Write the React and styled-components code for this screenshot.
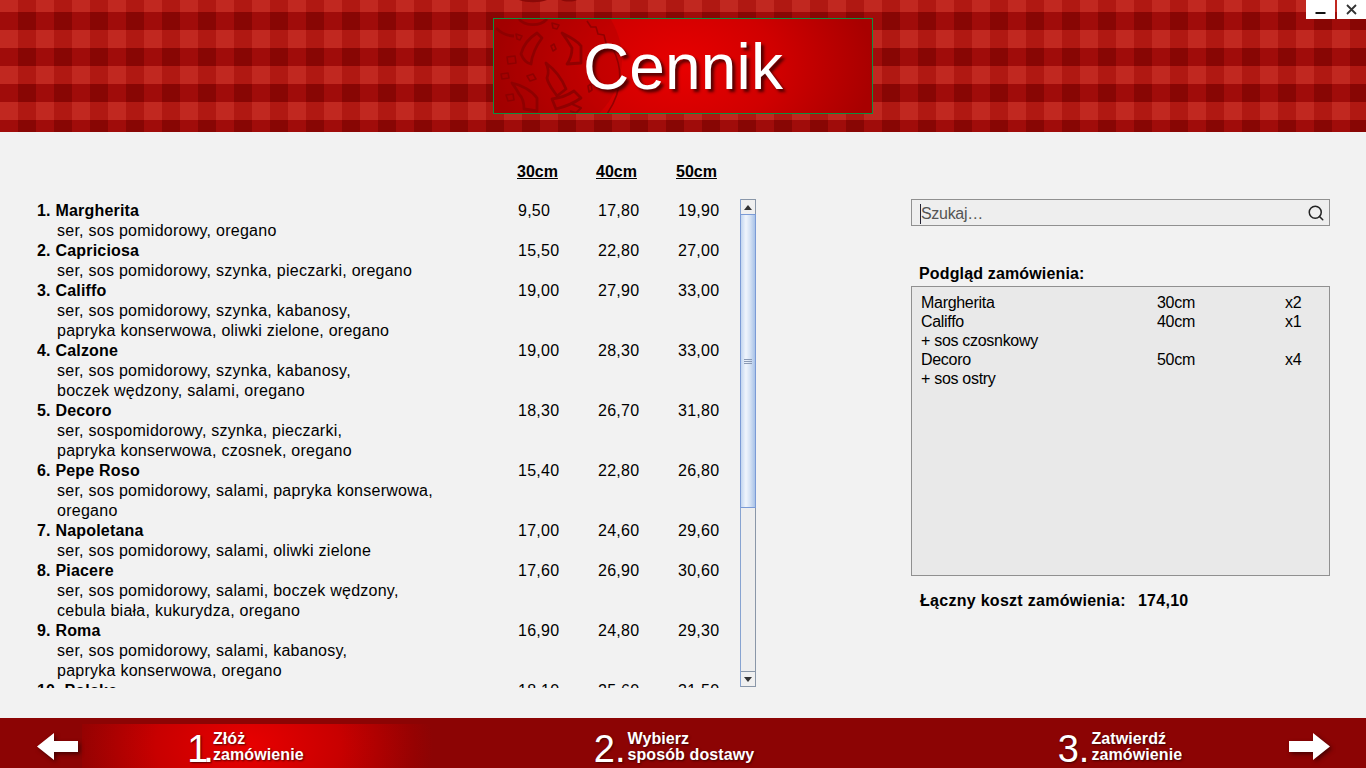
import React from "react";
import styled, { createGlobalStyle } from "styled-components";
import { Search } from "lucide-react";

const Global = createGlobalStyle`
  html, body { margin: 0; padding: 0; }
  body { background: #f2f2f2; font-family: "Liberation Sans", Arial, sans-serif; color: #000; }
  * { box-sizing: border-box; }
`;

const Page = styled.div`
  width: 1366px;
  height: 768px;
  display: flex;
  flex-direction: column;
  overflow: hidden;
  background: #f2f2f2;
`;

const Header = styled.header`
  position: relative;
  height: 132px;
  flex: none;
  display: flex;
  justify-content: center;
  padding-top: 18px;
  background: conic-gradient(#b01812 0 25%, #880604 0 50%, #a00c0a 0 75%, #c12820 0) 0 -6px / 36px 36px;
`;

const TitleBox = styled.div`
  position: relative;
  width: 380px;
  height: 96px;
  border: 1px solid #0f8f3f;
  background: radial-gradient(ellipse 190px 130px at 50% 50%, #e80000 0%, #d00000 50%, #a80000 100%);
  display: flex;
  justify-content: center;
  overflow: hidden;
`;

const Watermark = styled.svg`
  position: absolute;
  left: 0;
  top: 0;
  width: 380px;
  height: 96px;
`;

const TopCrumb = styled.svg`
  position: absolute;
  left: 515px;
  top: 0;
  width: 70px;
  height: 4px;
`;

const Title = styled.h1`
  position: relative;
  margin: 0;
  font-size: 64px;
  line-height: 96px;
  font-weight: 400;
  letter-spacing: 0.15px;
  color: #fff;
  text-shadow: 3px 3px 3px rgba(60, 0, 0, 0.85);
`;

const WindowButtons = styled.div`
  position: absolute;
  top: 0;
  right: 0;
  display: flex;
  gap: 2px;
`;

const WindowButton = styled.div`
  width: 29px;
  height: 19px;
  background: #fff;
  display: flex;
  align-items: center;
  justify-content: center;
  svg { display: block; }
`;

const Main = styled.main`
  flex: 1;
  display: flex;
  min-height: 0;
`;

const LeftColumn = styled.section`
  width: 874px;
  margin-right: 37px;
  padding: 30px 0 0 37px;
  flex: none;
`;

const SizeHeader = styled.div`
  display: grid;
  grid-template-columns: 480px 79px 80px 80px;
  height: 20px;
  margin-bottom: 18px;
`;

const SizeLabel = styled.span`
  font-size: 16px;
  line-height: 20px;
  font-weight: 700;
  text-decoration: underline;
`;

const ListRow = styled.div`
  display: flex;
  align-items: stretch;
`;

const PizzaList = styled.div`
  width: 703px;
  height: 488px;
  padding-top: 1px;
  overflow: hidden;
`;

const Pizza = styled.div`
  display: grid;
  grid-template-columns: 481px 80px 80px 62px;
  font-size: 16px;
  line-height: 20px;
  letter-spacing: 0.26px;
`;

const PizzaName = styled.div`
  font-weight: 700;
  letter-spacing: 0.2px;
`;

const PizzaLine = styled.div`
  padding-left: 20px;
`;

const Scrollbar = styled.div`
  width: 16px;
  height: 488px;
  margin-top: -1px;
  display: flex;
  flex-direction: column;
  background: #eeeeee;
  border-left: 1px solid #87a3d0;
  border-right: 1px solid #8a97a8;
  border-bottom: 1px solid #8a97a8;
`;

const ScrollButton = styled.div`
  height: 15px;
  flex: none;
  display: flex;
  align-items: center;
  justify-content: center;
  background: #f0f0f0;
  border-top: 1px solid #8a97a8;
  svg { display: block; }
`;

const Thumb = styled.div`
  height: 294px;
  flex: none;
  margin: 0 -1px;
  display: flex;
  align-items: center;
  justify-content: center;
  border: 1px solid #7b9bd6;
  background: linear-gradient(90deg, #c3d6f0 0%, #f0f5fc 35%, #d5e2f4 65%, #a9c3e8 100%);
`;

const Grip = styled.div`
  width: 8px;
  height: 5px;
  border-top: 1px solid #8a9ab5;
  border-bottom: 1px solid #8a9ab5;
  background: linear-gradient(#8a9ab5, #8a9ab5) center / 100% 1px no-repeat;
`;

const Track = styled.div`
  flex: 1;
`;

const RightColumn = styled.aside`
  width: 419px;
  flex: none;
  padding-top: 67px;
  display: flex;
  flex-direction: column;
`;

const SearchBox = styled.div`
  height: 27px;
  display: flex;
  align-items: center;
  justify-content: space-between;
  padding: 2px 4px 0 8px;
  background: #eeeeee;
  border: 1px solid #909090;
  svg { margin-top: -2px; }
`;

const Placeholder = styled.span`
  font-size: 16px;
  line-height: 20px;
  letter-spacing: -0.3px;
  color: #555;
  border-left: 1px solid #223;
`;

const SectionTitle = styled.div`
  margin: 38px 0 2px 8px;
  font-size: 16px;
  line-height: 20px;
  font-weight: 700;
  letter-spacing: 0.15px;
`;

const OrderBox = styled.div`
  height: 290px;
  padding: 6px 9px;
  background: #e9e9e9;
  border: 1px solid #909090;
`;

const OrderLine = styled.div`
  display: grid;
  grid-template-columns: 236px 128px 1fr;
  font-size: 16px;
  line-height: 19px;
  letter-spacing: -0.3px;
`;

const Total = styled.div`
  margin: 15px 0 0 9px;
  display: flex;
  gap: 12px;
  font-size: 16px;
  line-height: 20px;
  font-weight: 700;
  letter-spacing: 0.28px;
`;

const Footer = styled.footer`
  height: 50px;
  flex: none;
  background: #8c0404;
  display: grid;
  grid-template-columns: 82px 351px 75px 332px 114px 332px 80px;
  align-items: end;
`;

const ArrowCell = styled.div`
  height: 50px;
  display: flex;
  align-items: center;
  justify-content: ${(p) => (p.$right ? "flex-start" : "flex-end")};
  padding: ${(p) => (p.$right ? "6px 0 0 3px" : "6px 4px 0 0")};
  svg { display: block; overflow: visible; filter: drop-shadow(2px 2px 2px rgba(40, 0, 0, 0.7)); }
`;

const Step = styled.div`
  height: 44px;
  display: flex;
  justify-content: center;
  align-items: flex-end;
  padding-right: ${(p) => (p.$active ? 24 : 0)}px;
  color: #fff;
  text-shadow: 1px 1px 2px rgba(50, 0, 0, 0.8);
  background: ${(p) =>
    p.$active
      ? "radial-gradient(ellipse 185px 130px at 166px 50%, #e80000 0%, #c80000 50%, #960202 90%, #8c0404 100%)"
      : "transparent"};
`;

const StepNumber = styled.span`
  font-size: 38px;
  line-height: 46px;
  margin-right: ${(p) => (p.$tight ? 4 : 2)}px;
  margin-bottom: -4px;
  letter-spacing: ${(p) => (p.$tight ? -5 : 0)}px;
`;

const StepText = styled.div`
  font-size: 16px;
  line-height: 16px;
  font-weight: 700;
  letter-spacing: 0.1px;
  padding-bottom: 5px;
`;

const Spacer = styled.div``;

const pizzas = [
  ["1. Margherita", ["ser, sos pomidorowy, oregano"], ["9,50", "17,80", "19,90"]],
  ["2. Capriciosa", ["ser, sos pomidorowy, szynka, pieczarki, oregano"], ["15,50", "22,80", "27,00"]],
  ["3. Califfo", ["ser, sos pomidorowy, szynka, kabanosy,", "papryka konserwowa, oliwki zielone, oregano"], ["19,00", "27,90", "33,00"]],
  ["4. Calzone", ["ser, sos pomidorowy, szynka, kabanosy,", "boczek wędzony, salami, oregano"], ["19,00", "28,30", "33,00"]],
  ["5. Decoro", ["ser, sospomidorowy, szynka, pieczarki,", "papryka konserwowa, czosnek, oregano"], ["18,30", "26,70", "31,80"]],
  ["6. Pepe Roso", ["ser, sos pomidorowy, salami, papryka konserwowa,", "oregano"], ["15,40", "22,80", "26,80"]],
  ["7. Napoletana", ["ser, sos pomidorowy, salami, oliwki zielone"], ["17,00", "24,60", "29,60"]],
  ["8. Piacere", ["ser, sos pomidorowy, salami, boczek wędzony,", "cebula biała, kukurydza, oregano"], ["17,60", "26,90", "30,60"]],
  ["9. Roma", ["ser, sos pomidorowy, salami, kabanosy,", "papryka konserwowa, oregano"], ["16,90", "24,80", "29,30"]],
  ["10. Polska", ["ser, sos pomidorowy, salami"], ["18,10", "25,60", "31,50"]],
];

const order = [
  ["Margherita", "30cm", "x2"],
  ["Califfo", "40cm", "x1"],
  ["+ sos czosnkowy", "", ""],
  ["Decoro", "50cm", "x4"],
  ["+ sos ostry", "", ""],
];

const PizzaArt = () => (
  <Watermark viewBox="0 0 380 96" fill="none" stroke="#8c0000" strokeOpacity="0.9" strokeWidth="2.8" strokeLinejoin="round">
    <circle cx="52" cy="40" r="76" fill="#8c0000" fillOpacity="0.22" stroke="none" />
    <path d="M2 9 C8 15 14 17 20 17" />
    <path d="M25 0 C30 7 46 8 53 0" />
    <path d="M93 2 L97 8 L102 8 L104 15 L110 16 L112 24 L119 30 C128 48 130 70 113 95" strokeWidth="1.6" />
    <path d="M43 14 L48 19 C42 27 38 36 37 45 C32 44 29 40 27 35 C29 27 35 19 43 14Z" />
    <path d="M68 14 C76 18 84 22 87 27 L87 44 L73 45 C78 38 78 32 78 29 C75 24 71 18 68 14Z" />
    <path d="M52 44 C60 50 68 60 72 70 L63 77 C60 72 54 66 53 59 C55 54 54 48 52 44Z" />
    <path d="M18 64 C28 66 38 72 43 79 L43 92 L30 90 C30 84 28 78 25 75 C23 71 20 67 18 64Z" />
    <path d="M58 80 C66 79 74 76 80 72 L87 79 C80 84 70 88 62 90Z" />
    <path d="M78 85 L87 89 L82 94 L76 92" strokeWidth="2" />
    <path d="M22 15 L28 17 L26 21 L23 20Z M58 4 L65 6 L63 10 L59 9Z M13 38 L21 37 L22 44 L14 45Z M57 27 L60 25 L62 30 L59 32Z M33 57 L39 55 L42 60 L36 62Z M12 76 L19 75 L20 81 L14 82Z M7 55 L14 54 L15 59 L8 60Z M94 67 L97 65 L98 71 L95 73Z" strokeWidth="1.6" />
  </Watermark>
);

const ArrowLeft = () => (
  <svg width="41" height="27" viewBox="0 0 41 27"><path d="M0 13.5 L17 0 V8 H41 V19 H17 V27Z" fill="#fff" /></svg>
);
const ArrowRight = () => (
  <svg width="41" height="27" viewBox="0 0 41 27"><path d="M41 13.5 L24 0 V8 H0 V19 H24 V27Z" fill="#fff" /></svg>
);

export default function App() {
  return (
    <Page>
      <Global />
      <Header>
        <TopCrumb viewBox="0 0 70 4"><path d="M4 0 C12 3 24 3 32 0 Z M46 0 C50 2 58 2 62 0 Z" fill="#8a0a08" /></TopCrumb>
        <TitleBox>
          <PizzaArt />
          <Title>Cennik</Title>
        </TitleBox>
        <WindowButtons>
          <WindowButton>
            <svg width="11" height="19" viewBox="0 0 11 19"><rect x="0.5" y="12" width="10" height="2" fill="#111" /></svg>
          </WindowButton>
          <WindowButton>
            <svg width="11" height="11" viewBox="0 0 11 11"><path d="M1 1 L10 10 M10 1 L1 10" stroke="#333" strokeWidth="1.8" /></svg>
          </WindowButton>
        </WindowButtons>
      </Header>
      <Main>
        <LeftColumn>
          <SizeHeader>
            <span />
            <SizeLabel>30cm</SizeLabel>
            <SizeLabel>40cm</SizeLabel>
            <SizeLabel>50cm</SizeLabel>
          </SizeHeader>
          <ListRow>
            <PizzaList>
              {pizzas.map(([name, lines, prices]) => (
                <Pizza key={name}>
                  <div>
                    <PizzaName>{name}</PizzaName>
                    {lines.map((l) => (
                      <PizzaLine key={l}>{l}</PizzaLine>
                    ))}
                  </div>
                  <span>{prices[0]}</span>
                  <span>{prices[1]}</span>
                  <span>{prices[2]}</span>
                </Pizza>
              ))}
            </PizzaList>
            <Scrollbar>
              <ScrollButton>
                <svg width="8" height="5" viewBox="0 0 8 5"><path d="M4 0 L8 5 H0Z" fill="#333" /></svg>
              </ScrollButton>
              <Thumb><Grip /></Thumb>
              <Track />
              <ScrollButton>
                <svg width="8" height="5" viewBox="0 0 8 5"><path d="M0 0 H8 L4 5Z" fill="#333" /></svg>
              </ScrollButton>
            </Scrollbar>
          </ListRow>
        </LeftColumn>
        <RightColumn>
          <SearchBox>
            <Placeholder>Szukaj…</Placeholder>
            <Search size={18} color="#222" strokeWidth={2} />
          </SearchBox>
          <SectionTitle>Podgląd zamówienia:</SectionTitle>
          <OrderBox>
            {order.map((o, i) => (
              <OrderLine key={i}>
                <span>{o[0]}</span>
                <span>{o[1]}</span>
                <span>{o[2]}</span>
              </OrderLine>
            ))}
          </OrderBox>
          <Total>
            <span>Łączny koszt zamówienia:</span>
            <span>174,10</span>
          </Total>
        </RightColumn>
      </Main>
      <Footer>
        <ArrowCell><ArrowLeft /></ArrowCell>
        <Step $active>
          <StepNumber $tight>1.</StepNumber>
          <StepText>Złóż<br />zamówienie</StepText>
        </Step>
        <Spacer />
        <Step>
          <StepNumber>2.</StepNumber>
          <StepText>Wybierz<br />sposób dostawy</StepText>
        </Step>
        <Spacer />
        <Step>
          <StepNumber>3.</StepNumber>
          <StepText>Zatwierdź<br />zamówienie</StepText>
        </Step>
        <ArrowCell $right><ArrowRight /></ArrowCell>
      </Footer>
    </Page>
  );
}
